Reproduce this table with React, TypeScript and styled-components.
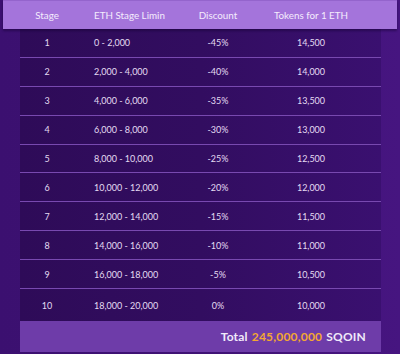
import React from "react";
import styled, { createGlobalStyle } from "styled-components";

const Global = createGlobalStyle`
  html, body { margin: 0; padding: 0; }
  body {
    width: 400px;
    height: 354px;
    overflow: hidden;
    background: linear-gradient(90deg, #3b1070 0%, #3f1274 50%, #461580 100%);
    font-family: Lato, "Open Sans", sans-serif;
  }
`;

const Page = styled.div`
  width: 400px;
  height: 354px;
  display: flex;
  flex-direction: column;
`;

const cols = "54px 110px 68px 118px";

const HeaderBar = styled.div`
  margin: 0 3px;
  height: 29px;
  background: #a474db;
  border-top: 1px solid #9464cc;
  box-sizing: border-box;
  display: grid;
  grid-template-columns: ${cols};
  align-items: center;
  padding-left: 17px;
  box-shadow: 0 2px 2px rgba(20, 0, 50, 0.45);
  position: relative;
  z-index: 1;
`;

const HeadCell = styled.div<{ $left?: boolean }>`
  color: #f4ecfd;
  font-size: 9.8px;
  text-align: ${(p) => (p.$left ? "left" : "center")};
  padding-left: ${(p) => (p.$left ? "20px" : "0")};
  white-space: nowrap;
`;

const Body = styled.div`
  margin: 0 19px 0 20px;
  background: linear-gradient(90deg, #2e0b58 0%, #320d60 50%, #3a1070 100%);
  display: flex;
  flex-direction: column;
`;

const Row = styled.div<{ $h: number; $line?: boolean }>`
  height: ${(p) => p.$h}px;
  display: grid;
  grid-template-columns: ${cols};
  align-items: center;
  border-bottom: ${(p) => (p.$line ? "1px solid #7849b0" : "none")};
`;

const Cell = styled.div<{ $left?: boolean }>`
  color: #e4dbf2;
  font-size: 9px;
  text-align: ${(p) => (p.$left ? "left" : "center")};
  padding-left: ${(p) => (p.$left ? "20px" : "0")};
  white-space: nowrap;
`;

const Footer = styled.div`
  margin: 0 19px 0 20px;
  height: 31px;
  background: #6e3ca9;
  display: flex;
  align-items: center;
  justify-content: flex-end;
  padding-right: 15px;
  font-weight: 700;
  font-size: 12px;
  color: #f1eafa;
  letter-spacing: 0.2px;
`;

const Gold = styled.span`
  color: #f3a732;
  margin: 0 4px;
`;

const data = [
  ["1", "0 - 2,000", "-45%", "14,500"],
  ["2", "2,000 - 4,000", "-40%", "14,000"],
  ["3", "4,000 - 6,000", "-35%", "13,500"],
  ["4", "6,000 - 8,000", "-30%", "13,000"],
  ["5", "8,000 - 10,000", "-25%", "12,500"],
  ["6", "10,000 - 12,000", "-20%", "12,000"],
  ["7", "12,000 - 14,000", "-15%", "11,500"],
  ["8", "14,000 - 16,000", "-10%", "11,000"],
  ["9", "16,000 - 18,000", "-5%", "10,500"],
  ["10", "18,000 - 20,000", "0%", "10,000"],
];

export default function App() {
  return (
    <Page>
      <Global />
      <HeaderBar>
        <HeadCell>Stage</HeadCell>
        <HeadCell $left>ETH Stage Limin</HeadCell>
        <HeadCell>Discount</HeadCell>
        <HeadCell>Tokens for 1 ETH</HeadCell>
      </HeaderBar>
      <Body>
        {data.map((r, i) => (
          <Row key={r[0]} $h={i === 9 ? 32 : 27.9} $line={i < 9}>
            <Cell>{r[0]}</Cell>
            <Cell $left>{r[1]}</Cell>
            <Cell>{r[2]}</Cell>
            <Cell>{r[3]}</Cell>
          </Row>
        ))}
      </Body>
      <Footer>
        Total<Gold>245,000,000</Gold>SQOIN
      </Footer>
    </Page>
  );
}
